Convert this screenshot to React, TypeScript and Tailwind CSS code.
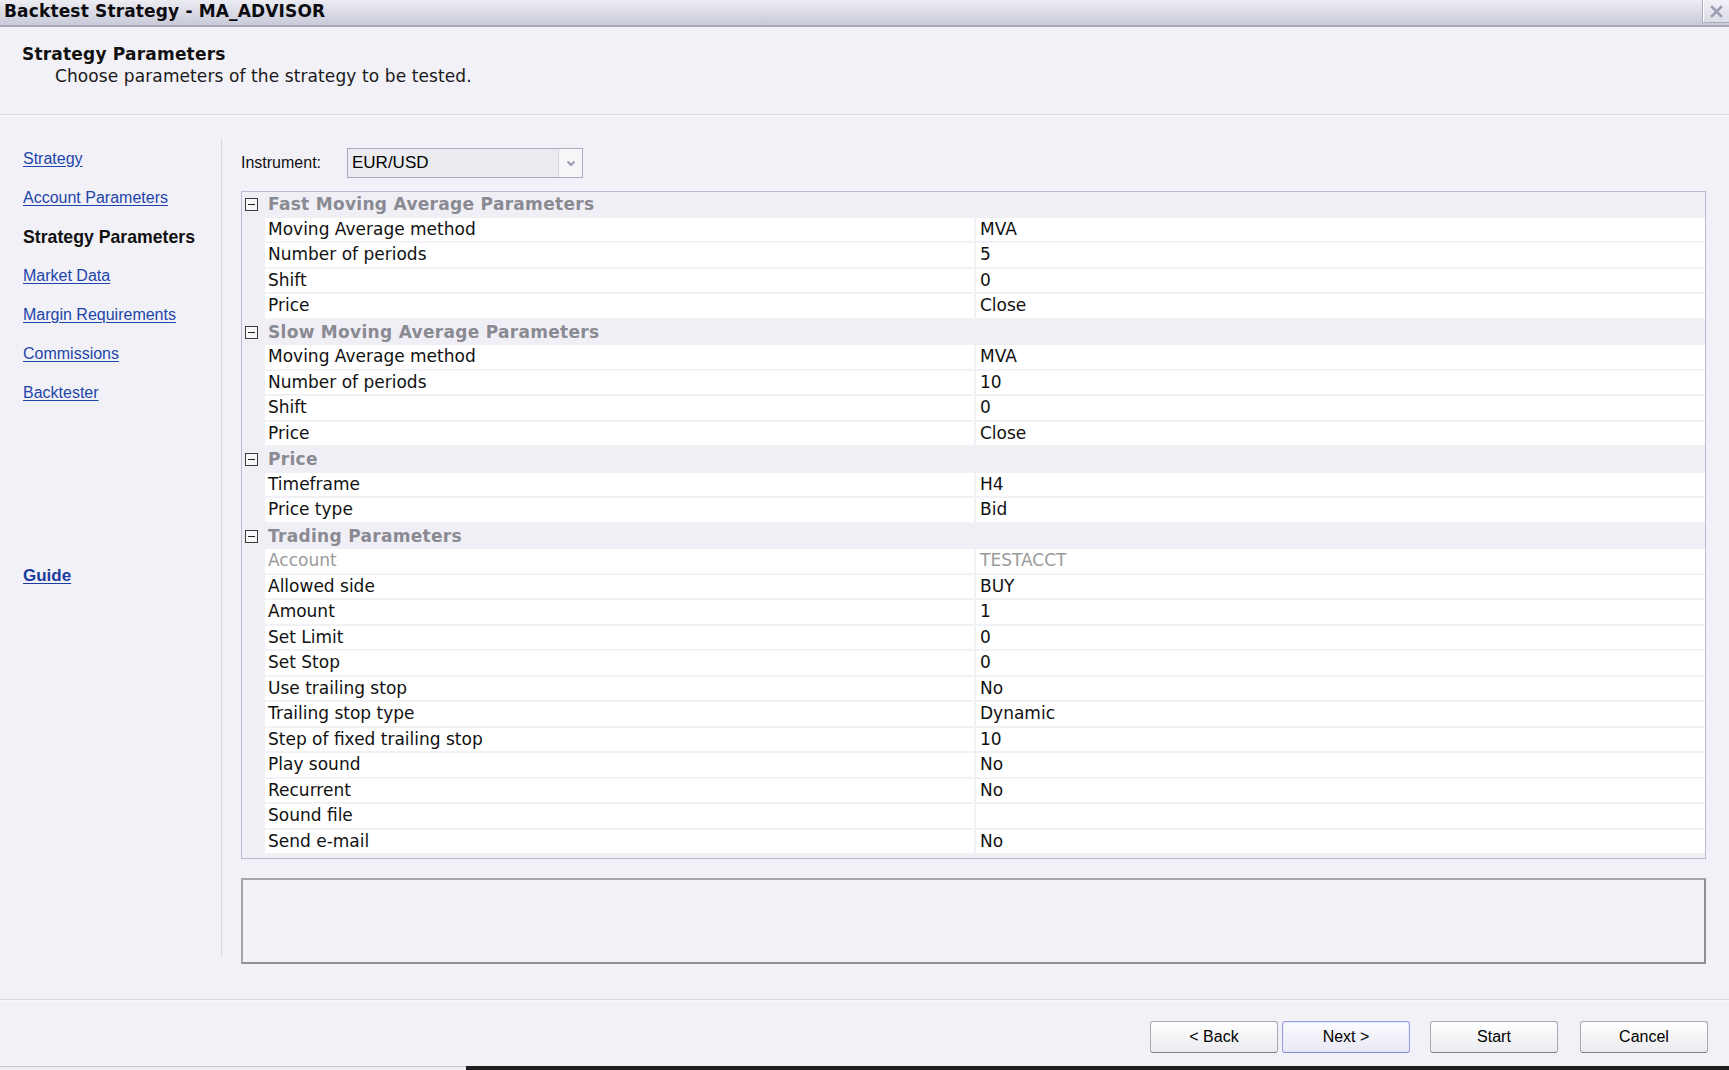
import React from "react";

type Row =
  | { kind: "group"; label: string }
  | { kind: "prop"; name: string; value: string; disabled?: boolean };

const rows: Row[] = [
  { kind: "group", label: "Fast Moving Average Parameters" },
  { kind: "prop", name: "Moving Average method", value: "MVA" },
  { kind: "prop", name: "Number of periods", value: "5" },
  { kind: "prop", name: "Shift", value: "0" },
  { kind: "prop", name: "Price", value: "Close" },
  { kind: "group", label: "Slow Moving Average Parameters" },
  { kind: "prop", name: "Moving Average method", value: "MVA" },
  { kind: "prop", name: "Number of periods", value: "10" },
  { kind: "prop", name: "Shift", value: "0" },
  { kind: "prop", name: "Price", value: "Close" },
  { kind: "group", label: "Price" },
  { kind: "prop", name: "Timeframe", value: "H4" },
  { kind: "prop", name: "Price type", value: "Bid" },
  { kind: "group", label: "Trading Parameters" },
  { kind: "prop", name: "Account", value: "TESTACCT", disabled: true },
  { kind: "prop", name: "Allowed side", value: "BUY" },
  { kind: "prop", name: "Amount", value: "1" },
  { kind: "prop", name: "Set Limit", value: "0" },
  { kind: "prop", name: "Set Stop", value: "0" },
  { kind: "prop", name: "Use trailing stop", value: "No" },
  { kind: "prop", name: "Trailing stop type", value: "Dynamic" },
  { kind: "prop", name: "Step of fixed trailing stop", value: "10" },
  { kind: "prop", name: "Play sound", value: "No" },
  { kind: "prop", name: "Recurrent", value: "No" },
  { kind: "prop", name: "Sound file", value: "" },
  { kind: "prop", name: "Send e-mail", value: "No" },
];

const navLinks = [
  "Strategy",
  "Account Parameters",
  "Strategy Parameters",
  "Market Data",
  "Margin Requirements",
  "Commissions",
  "Backtester",
];

function MinusBox() {
  return (
    <div className="ml-[3px] flex h-[13px] w-[13px] items-center justify-center border border-[#3a3a3a] bg-[#f7f7fa]">
      <div className="h-[1px] w-[7px] bg-[#222]" />
    </div>
  );
}

function Btn({ label, primary }: { label: string; primary?: boolean }) {
  return (
    <button
      className={
        primary
          ? "flex h-[32px] w-[128px] items-center justify-center rounded-[3px] border border-[#9aa0e2] border-b-[#8088cc] bg-gradient-to-b from-[#fbfbff] to-[#e9e9f5] text-[16px] text-black shadow-[inset_0_0_0_1px_#e4e6fb] font-['Liberation_Sans',Arial,sans-serif]"
          : "flex h-[32px] w-[128px] items-center justify-center rounded-[3px] border border-[#a8a8b4] border-b-[#7e7e8a] bg-gradient-to-b from-[#ffffff] to-[#ebebf0] text-[16px] text-black font-['Liberation_Sans',Arial,sans-serif]"
      }
    >
      {label}
    </button>
  );
}

export default function App() {
  return (
    <div className="flex h-[1070px] w-[1729px] flex-col overflow-hidden bg-[#f2f1f7] font-['DejaVu_Sans',Verdana,sans-serif] text-black">
      {/* Title bar */}
      <div className="flex h-[27px] shrink-0 items-start justify-between border-b-2 border-[#a6a7ba] bg-gradient-to-b from-[#ececf2] to-[#c9cad9]">
        <div className="pl-[4px] pt-[1px] text-[17px] font-bold leading-[20px] tracking-[0.15px] text-[#0c0c10]">
          Backtest Strategy - MA_ADVISOR
        </div>
        <div className="flex h-[23px] w-[27px] items-center justify-center border-b border-l border-[#a9aabb] bg-gradient-to-b from-[#f1f1f6] to-[#dcdde6] shadow-[inset_1px_0_0_#ffffff]">
          <svg width="13" height="13" viewBox="0 0 13 13">
            <path d="M2 2 L11 11 M11 2 L2 11" stroke="#9c9db2" strokeWidth="2.6" strokeLinecap="square" />
          </svg>
        </div>
      </div>

      {/* Header */}
      <div className="h-[87px] shrink-0 pt-[17px]">
        <div className="pl-[22px] text-[17px] font-bold leading-[20px] tracking-[0.2px] text-[#111]">Strategy Parameters</div>
        <div className="pl-[55px] pt-[2px] text-[17px] leading-[20px] tracking-[0.1px] text-[#1a1a1a]">
          Choose parameters of the strategy to be tested.
        </div>
      </div>
      <div className="h-[2px] shrink-0 border-t border-[#d9d9e3] bg-[#f8f8fb]" />

      {/* Body */}
      <div className="flex h-[883px] shrink-0 pt-[22px]">
        <div className="flex h-[819px] w-[222px] shrink-0 flex-col border-r border-[#d8d8e2] pt-[11px] pl-[23px] font-['Liberation_Sans',Arial,sans-serif]">
          {navLinks.map((l) =>
            l === "Strategy Parameters" ? (
              <div key={l} className="h-[39px] text-[17.7px] font-bold leading-[20px] text-[#111]">
                {l}
              </div>
            ) : (
              <div key={l} className="h-[39px] text-[16px] leading-[20px] text-[#1d45aa] underline underline-offset-2">
                {l}
              </div>
            )
          )}
          <div className="mt-[144px] text-[17px] font-bold leading-[20px] text-[#1a3d9e] underline underline-offset-2">
            Guide
          </div>
        </div>

        <div className="flex min-w-0 flex-1 flex-col pl-[19px] pr-[23px]">
          {/* Instrument */}
          <div className="mt-[10px] flex h-[30px] items-center font-['Liberation_Sans',Arial,sans-serif]">
            <div className="w-[106px] text-[16px] text-[#111]">Instrument:</div>
            <div className="flex h-[30px] w-[236px] items-stretch border border-[#a9abbf] bg-[#ebebf0]">
              <div className="flex flex-1 items-center pl-[4px] text-[17px] text-black">EUR/USD</div>
              <div className="flex w-[24px] items-center justify-center border-l border-[#d4d5df] bg-[#f6f6f9]">
                <svg width="10" height="7" viewBox="0 0 10 7">
                  <path d="M1.5 1.5 L5 5 L8.5 1.5" stroke="#9a9cad" strokeWidth="2" fill="none" />
                </svg>
              </div>
            </div>
          </div>

          {/* Property grid */}
          <div className="mt-[13px] h-[668px] border border-[#b8bbd2] bg-[#f0eff6] pb-[3px]">
            {rows.map((r, i) =>
              r.kind === "group" ? (
                <div key={i} className="flex h-[25.5px] items-center">
                  <div className="flex w-[23px] items-center">
                    <MinusBox />
                  </div>
                  <div className="pl-[3px] text-[17px] font-bold tracking-[0.3px] text-[#8a8a92]">{r.label}</div>
                </div>
              ) : (
                <div key={i} className="flex h-[25.5px]">
                  <div className="w-[23px] shrink-0" />
                  <div className="flex flex-1 border-b-2 border-[#f2f2f6] bg-white text-[17px]">
                    <div
                      className={
                        "flex w-[711px] shrink-0 items-center border-r-2 border-[#f2f2f6] pl-[3px] " +
                        (r.disabled ? "text-[#9a9a9a]" : "text-[#111]")
                      }
                    >
                      {r.name}
                    </div>
                    <div
                      className={
                        "flex flex-1 items-center pl-[4px] " + (r.disabled ? "text-[#9a9a9a]" : "text-[#111]")
                      }
                    >
                      {r.value}
                    </div>
                  </div>
                </div>
              )
            )}
          </div>

          {/* Description box */}
          <div className="mt-[19px] h-[86px] border-2 border-[#a4a4a9] border-b-[#8e8e93] border-r-[#8e8e93]" />
        </div>
      </div>

      {/* Footer */}
      <div className="h-[2px] shrink-0 border-t border-[#d9d9e3] bg-[#f8f8fb]" />
      <div className="flex h-[65px] shrink-0 items-start justify-end pr-[21px] pt-[20px]">
        <div className="flex">
          <Btn label="< Back" />
          <div className="w-[4px]" />
          <Btn label="Next >" primary />
          <div className="w-[20px]" />
          <Btn label="Start" />
          <div className="w-[22px]" />
          <Btn label="Cancel" />
        </div>
      </div>
      <div className="flex h-[4px] shrink-0">
        <div className="w-[466px] border-t border-[#c6c6cf] bg-[#ececf2]" />
        <div className="flex-1 bg-[#1f1f1f]" />
      </div>
    </div>
  );
}
